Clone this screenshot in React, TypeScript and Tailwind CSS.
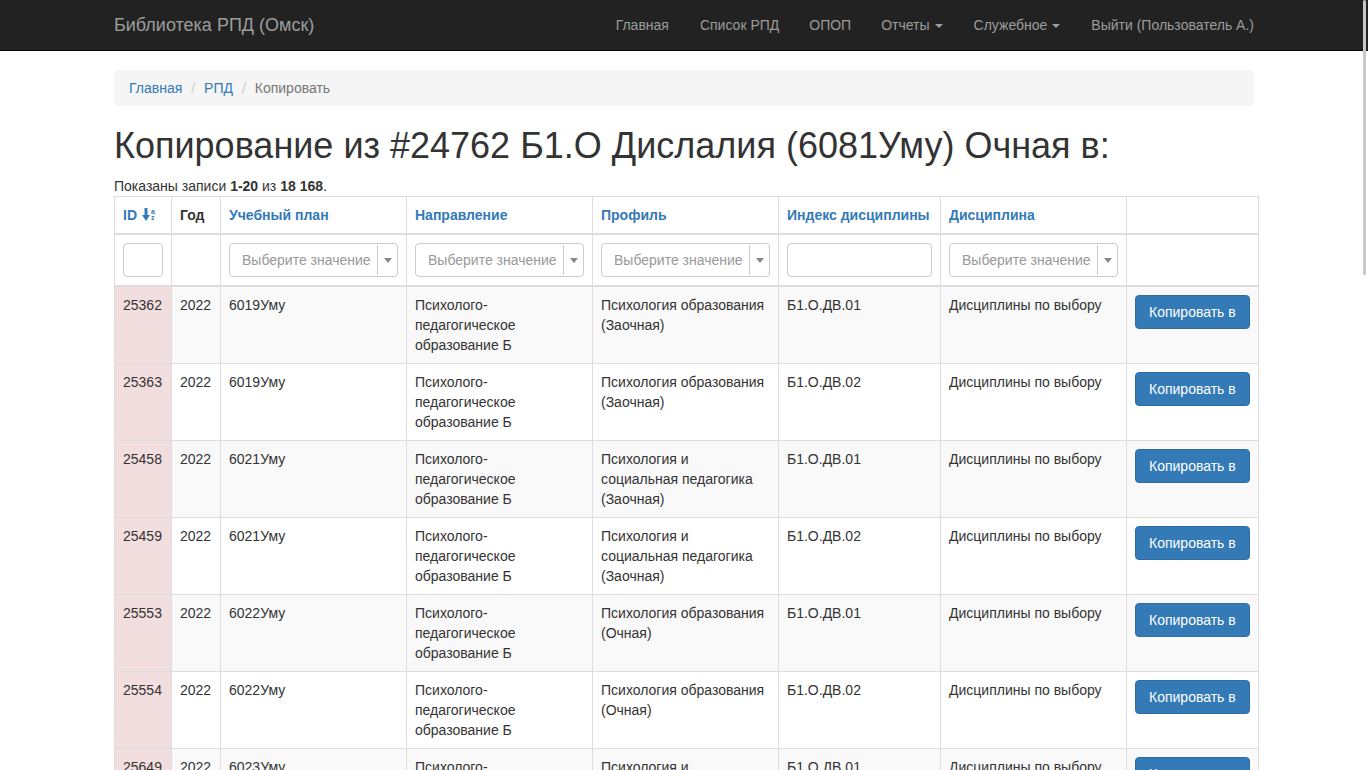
import React from "react";

const rows = [
  { id: "25362", plan: "6019Уму", prof: "Психология образования (Заочная)", idx: "Б1.О.ДВ.01" },
  { id: "25363", plan: "6019Уму", prof: "Психология образования (Заочная)", idx: "Б1.О.ДВ.02" },
  { id: "25458", plan: "6021Уму", prof: "Психология и социальная педагогика (Заочная)", idx: "Б1.О.ДВ.01" },
  { id: "25459", plan: "6021Уму", prof: "Психология и социальная педагогика (Заочная)", idx: "Б1.О.ДВ.02" },
  { id: "25553", plan: "6022Уму", prof: "Психология образования (Очная)", idx: "Б1.О.ДВ.01" },
  { id: "25554", plan: "6022Уму", prof: "Психология образования (Очная)", idx: "Б1.О.ДВ.02" },
  { id: "25649", plan: "6023Уму", prof: "Психология и социальная педагогика (Заочная)", idx: "Б1.О.ДВ.01" },
  { id: "25650", plan: "6023Уму", prof: "Психология и социальная педагогика (Заочная)", idx: "Б1.О.ДВ.02" },
];

function Caret() {
  return (
    <span className="inline-block ml-[5px] align-middle w-0 h-0 border-l-[4px] border-r-[4px] border-t-[4px] border-l-transparent border-r-transparent border-t-[#9d9d9d]" />
  );
}

function Select2() {
  return (
    <div className="flex h-[34px] w-full border border-[#ccc] rounded-[4px] bg-white">
      <div className="flex-1 pl-[12px] flex items-center text-[#999] whitespace-nowrap overflow-hidden">Выберите значение</div>
      <div className="w-[20px] border-l border-[#ccc] flex items-center justify-center my-[1px]">
        <span className="w-0 h-0 border-l-[4px] border-r-[4px] border-t-[5px] border-l-transparent border-r-transparent border-t-[#888]" />
      </div>
    </div>
  );
}

export default function App() {
  const th = "border border-[#ddd] border-b-2 px-[8px] py-[8px] text-left align-bottom font-bold";
  const td = "border border-[#ddd] p-[8px] align-top";
  const ftd = "border border-[#ddd] border-b-2 p-[8px]";
  return (
    <div
      className="relative w-[1368px] h-[770px] overflow-hidden bg-white text-[14px] leading-[20px] text-[#333]"
      style={{ fontFamily: '"Liberation Sans", Arial, Helvetica, sans-serif' }}
    >
      {/* Navbar */}
      <div className="h-[51px] bg-[#222] border-b border-[#080808]">
        <div className="w-[1170px] mx-auto px-[15px] flex justify-between">
          <div className="text-[18px] leading-[20px] py-[15px] text-[#9d9d9d]">Библиотека РПД (Омск)</div>
          <div className="flex -mr-[15px] text-[#9d9d9d]">
            <div className="py-[15px] px-[16px]">Главная</div>
            <div className="py-[15px] px-[15px]">Список РПД</div>
            <div className="py-[15px] px-[15px]">ОПОП</div>
            <div className="py-[15px] px-[15px]">Отчеты<Caret /></div>
            <div className="py-[15px] px-[16px]">Служебное<Caret /></div>
            <div className="py-[15px] px-[15px]">Выйти (Пользователь А.)</div>
          </div>
        </div>
      </div>

      <div className="w-[1170px] mx-auto px-[15px] pt-[19px]">
        {/* Breadcrumb */}
        <div className="bg-[#f5f5f5] rounded-[4px] px-[15px] py-[8px] flex">
          <span className="text-[#337ab7]">Главная</span>
          <span className="ml-[4px] px-[5px] text-[#ccc]">/{"\u00a0"}</span>
          <span className="text-[#337ab7]">РПД</span>
          <span className="ml-[4px] px-[5px] text-[#ccc]">/{"\u00a0"}</span>
          <span className="text-[#777]">Копировать</span>
        </div>

        <h1 className="mt-[20px] mb-[10px] text-[36px] leading-[40px] font-medium text-[#333]">
          Копирование из #24762 Б1.О Дислалия (6081Уму) Очная в:
        </h1>

        <div>
          Показаны записи <b>1-20</b> из <b>18 168</b>.
        </div>

        <table className="border-collapse border border-[#ddd] w-[1144px] table-fixed">
          <colgroup>
            <col className="w-[57px]" />
            <col className="w-[49px]" />
            <col className="w-[186px]" />
            <col className="w-[186px]" />
            <col className="w-[186px]" />
            <col className="w-[162px]" />
            <col className="w-[186px]" />
            <col className="w-[132px]" />
          </colgroup>
          <thead>
            <tr>
              <th className={th + " text-[#337ab7]"}>
                <span className="inline-flex items-center">
                  ID
                  <span className="inline-flex items-end ml-[5px]">
                    <svg width="8" height="13" viewBox="0 0 8 13" className="mb-[1px]">
                      <rect x="2.5" y="0" width="3" height="8" fill="#337ab7" />
                      <polygon points="0,7 8,7 4,13" fill="#337ab7" />
                    </svg>
                    <span className="flex flex-col text-[7px] leading-[6px] font-bold ml-[1px] mb-[1px]">
                      <span>a</span>
                      <span>z</span>
                    </span>
                  </span>
                </span>
              </th>
              <th className={th}>Год</th>
              <th className={th + " text-[#337ab7]"}>Учебный план</th>
              <th className={th + " text-[#337ab7]"}>Направление</th>
              <th className={th + " text-[#337ab7]"}>Профиль</th>
              <th className={th + " text-[#337ab7] whitespace-nowrap"}>Индекс дисциплины</th>
              <th className={th + " text-[#337ab7]"}>Дисциплина</th>
              <th className={th}></th>
            </tr>
            <tr>
              <td className={ftd}>
                <div className="h-[34px] w-full border border-[#ccc] rounded-[4px]" />
              </td>
              <td className={ftd}></td>
              <td className={ftd}><Select2 /></td>
              <td className={ftd}><Select2 /></td>
              <td className={ftd}><Select2 /></td>
              <td className={ftd}>
                <div className="h-[34px] w-full border border-[#ccc] rounded-[4px]" />
              </td>
              <td className={ftd}><Select2 /></td>
              <td className={ftd}></td>
            </tr>
          </thead>
          <tbody>
            {rows.map((r, i) => (
              <tr key={r.id} className={i % 2 === 0 ? "bg-[#f9f9f9]" : "bg-white"}>
                <td className={td + " bg-[#f2dede]"}>{r.id}</td>
                <td className={td}>2022</td>
                <td className={td}>{r.plan}</td>
                <td className={td}>Психолого-педагогическое образование Б</td>
                <td className={td}><div className="w-[166px]">{r.prof}</div></td>
                <td className={td}>{r.idx}</td>
                <td className={td}>Дисциплины по выбору</td>
                <td className={td}>
                  <div className="inline-block bg-[#337ab7] border border-[#2e6da4] text-white rounded-[4px] px-[13px] py-[6px] whitespace-nowrap">
                    Копировать в
                  </div>
                </td>
              </tr>
            ))}
          </tbody>
        </table>
      </div>

      {/* overlay scrollbar */}
      <div className="absolute right-[2px] top-0 w-[3px] h-[275px] bg-[#c8c8c8] rounded-[2px]" />
    </div>
  );
}
